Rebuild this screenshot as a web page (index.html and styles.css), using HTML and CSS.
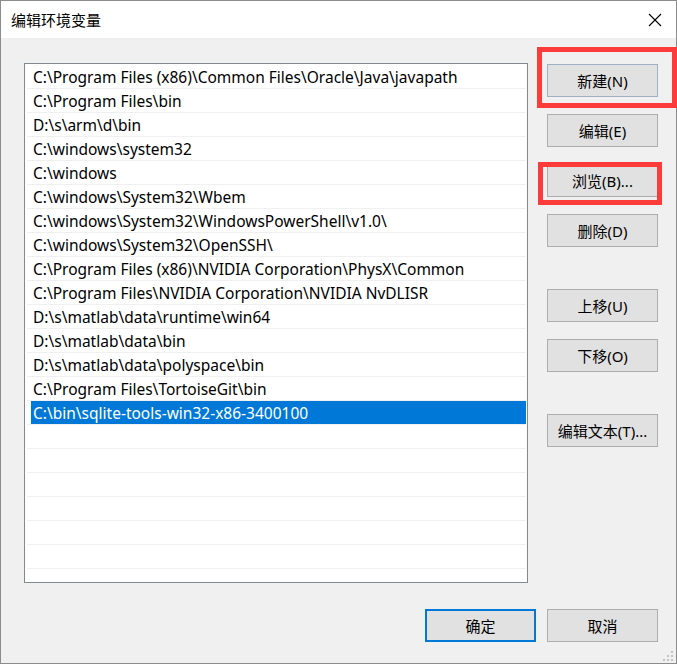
FILE: index.html
```html
<!DOCTYPE html>
<html lang="zh-CN">
<head>
    <meta charset="UTF-8">
    <title>编辑环境变量</title>
    <link rel="stylesheet" href="styles.css">
</head>
<body>

    <div class="window">
        <div class="title-bar">
            <span class="title">编辑环境变量</span>
            <svg class="close-icon" width="14" height="14" viewBox="0 0 14 14">
                <path d="M1 1 L13 13 M13 1 L1 13" stroke="#000" stroke-width="1.1" fill="none"/>
            </svg>
        </div>

        <div class="window-body">
            <div class="main">
                <div class="path-list">
                    <div class="row"><span class="label">C:\Program Files (x86)\Common Files\Oracle\Java\javapath</span></div>
                    <div class="row"><span class="label">C:\Program Files\bin</span></div>
                    <div class="row"><span class="label">D:\s\arm\d\bin</span></div>
                    <div class="row"><span class="label">C:\windows\system32</span></div>
                    <div class="row"><span class="label">C:\windows</span></div>
                    <div class="row"><span class="label">C:\windows\System32\Wbem</span></div>
                    <div class="row"><span class="label">C:\windows\System32\WindowsPowerShell\v1.0\</span></div>
                    <div class="row"><span class="label">C:\windows\System32\OpenSSH\</span></div>
                    <div class="row"><span class="label">C:\Program Files (x86)\NVIDIA Corporation\PhysX\Common</span></div>
                    <div class="row"><span class="label">C:\Program Files\NVIDIA Corporation\NVIDIA NvDLISR</span></div>
                    <div class="row"><span class="label">D:\s\matlab\data\runtime\win64</span></div>
                    <div class="row"><span class="label">D:\s\matlab\data\bin</span></div>
                    <div class="row"><span class="label">D:\s\matlab\data\polyspace\bin</span></div>
                    <div class="row"><span class="label">C:\Program Files\TortoiseGit\bin</span></div>
                    <div class="row selected"><span class="label">C:\bin\sqlite-tools-win32-x86-3400100</span></div>
                    <div class="row"></div>
                    <div class="row"></div>
                    <div class="row"></div>
                    <div class="row"></div>
                    <div class="row"></div>
                    <div class="row"></div>
                </div>

                <div class="side-buttons">
                    <button class="btn hover">新建(N)</button>
                    <button class="btn">编辑(E)</button>
                    <button class="btn">浏览(B)...</button>
                    <button class="btn">删除(D)</button>
                    <button class="btn group-start">上移(U)</button>
                    <button class="btn">下移(O)</button>
                    <button class="btn group-start">编辑文本(T)...</button>
                </div>
            </div>

            <div class="footer">
                <button class="btn default">确定</button>
                <button class="btn">取消</button>
            </div>
        </div>

        <svg class="grip" width="12" height="12" viewBox="0 0 12 12">
            <rect x="9" y="1" width="2" height="2" fill="#c4c4c4"/>
            <rect x="5" y="5" width="2" height="2" fill="#c4c4c4"/>
            <rect x="9" y="5" width="2" height="2" fill="#c4c4c4"/>
            <rect x="1" y="9" width="2" height="2" fill="#c4c4c4"/>
            <rect x="5" y="9" width="2" height="2" fill="#c4c4c4"/>
            <rect x="9" y="9" width="2" height="2" fill="#c4c4c4"/>
        </svg>

        <!-- red annotation boxes drawn over the dialog -->
        <div class="mark mark-new"></div>
        <div class="mark mark-browse"></div>
    </div>

</body>
</html>
```

FILE: styles.css
```css
* {
    box-sizing: border-box;
}

body {
    margin: 0;
    font-family: "Noto Sans", "Noto Sans CJK SC", sans-serif;
    font-size: 15px;
    color: #000;
    background: #f0f0f0;
    overflow: hidden;
}

.window {
    position: relative;
    width: 677px;
    height: 664px;
    border: 1px solid #8c8c8c;
    background-color: #f0f0f0;
}

.title-bar {
    height: 37px;
    background: #fff;
    display: flex;
    align-items: center;
    justify-content: space-between;
    padding: 1px 14px 0 10px;
}

.title {
    font-size: 15px;
    line-height: 1;
}

.close-icon {
    display: block;
}

.main {
    display: flex;
    padding: 25px 0 0 23px;
}

/* the list of paths */
.path-list {
    width: 504px;
    height: 520px;
    border: 1px solid #828790;
    background: #fff;
    padding: 1px 1px 0 1px;
    overflow: hidden;
}

.row {
    display: flex;
    height: 24px;
    margin-left: 1px;
    padding-left: 4px;
    border-bottom: 1px solid #f0f0f0;
}

.label {
    flex: 1;
    height: 23px;
    line-height: 24px;
    padding-left: 2px;
    font-size: 15.5px;
    white-space: nowrap;
}

.row.selected .label {
    background: #0078d7;
    color: #fff;
}

/* buttons on the right */
.side-buttons {
    display: flex;
    flex-direction: column;
    gap: 17px;
    margin: 1px 0 0 19px;
}

.btn {
    width: 111px;
    height: 33px;
    border: 1px solid #adadad;
    background: #e1e1e1;
    font-family: inherit;
    font-size: 15px;
    color: #000;
    padding: 0;
}

.btn.hover {
    border-color: #9fb0c6;
}

.btn.group-start {
    margin-top: 25px;
}

.btn.default {
    border: 2px solid #0078d7;
}

.footer {
    display: flex;
    justify-content: flex-end;
    gap: 11px;
    padding: 26px 18px 0 0;
}

.grip {
    position: absolute;
    right: 2px;
    bottom: 1px;
}

.mark {
    position: absolute;
    border: 5px solid #fe3b3b;
}

.mark-new {
    left: 536px;
    top: 46px;
    width: 140px;
    height: 61px;
}

.mark-browse {
    left: 537px;
    top: 161px;
    width: 124px;
    height: 43px;
}
```
